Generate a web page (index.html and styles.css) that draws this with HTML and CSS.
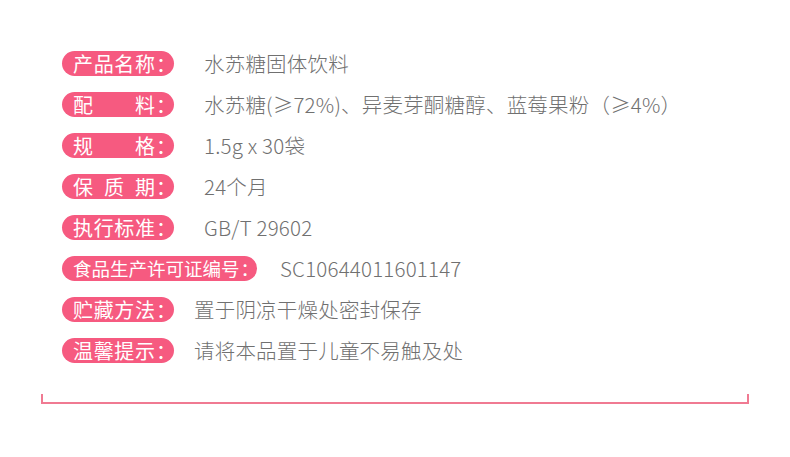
FILE: index.html
```html
<!DOCTYPE html>
<html lang="zh">
<head>
<meta charset="utf-8">
<link rel="stylesheet" href="styles.css">
</head>
<body>
<div class="page">
  <div class="list">
    <div class="row"><span class="pill"><span class="k">产品名称</span><span class="c">：</span></span><span class="v">水苏糖固体饮料</span></div>
    <div class="row"><span class="pill"><span class="k">配料</span><span class="c">：</span></span><span class="v">水苏糖(≥72%)、异麦芽酮糖醇、蓝莓果粉（≥4%）</span></div>
    <div class="row"><span class="pill"><span class="k">规格</span><span class="c">：</span></span><span class="v">1.5g x 30袋</span></div>
    <div class="row"><span class="pill"><span class="k">保质期</span><span class="c">：</span></span><span class="v">24个月</span></div>
    <div class="row"><span class="pill"><span class="k">执行标准</span><span class="c">：</span></span><span class="v">GB/T 29602</span></div>
    <div class="row row-long"><span class="pill pill-small"><span class="k">食品生产许可证编号</span><span class="c">：</span></span><span class="v">SC10644011601147</span></div>
    <div class="row row-near"><span class="pill"><span class="k">贮藏方法</span><span class="c">：</span></span><span class="v">置于阴凉干燥处密封保存</span></div>
    <div class="row row-near"><span class="pill"><span class="k">温馨提示</span><span class="c">：</span></span><span class="v">请将本品置于儿童不易触及处</span></div>
  </div>
  <div class="bracket"></div>
</div>
</body>
</html>
```
FILE: styles.css
```css
html, body {
  margin: 0;
  padding: 0;
  background: #ffffff;
}
body {
  font-family: "Noto Sans CJK SC", "Noto Sans", sans-serif;
}
.page {
  width: 790px;
  height: 457px;
  padding-top: 51px;
  box-sizing: border-box;
}
.list {
  margin-left: 62px;
  display: flex;
  flex-direction: column;
  gap: 16px;
}
.row {
  display: flex;
  align-items: center;
  height: 25px;
}
.pill {
  display: flex;
  align-items: center;
  height: 25px;
  box-sizing: border-box;
  padding: 0 9px 0 11px;
  background: #f65a80;
  color: #ffffff;
  border-radius: 13px;
  font-size: 20px;
  line-height: 25px;
  white-space: nowrap;
}
.pill .k {
  display: inline-block;
  width: 82px;
  text-align: justify;
  text-align-last: justify;
}
.pill .c {
  display: inline-block;
  margin-left: 1px;
  margin-right: -11px;
}
.pill-small {
  font-size: 18.5px;
  padding-right: 8px;
}
.pill-small .k {
  width: auto;
  text-align: left;
  text-align-last: auto;
}
.pill-small .c {
  margin-right: -10px;
}
.v {
  margin-left: 30px;
  color: #707070;
  font-size: 20.5px;
  letter-spacing: 0.2px;
  line-height: 25px;
  white-space: nowrap;
  font-weight: 300;
}
.row-long .v {
  margin-left: 23px;
}
.row-near .v {
  margin-left: 20px;
}
.bracket {
  margin: 31px 0 0 41px;
  width: 708px;
  height: 10px;
  box-sizing: border-box;
  border: 2px solid #f07a92;
  border-top: none;
}
```
